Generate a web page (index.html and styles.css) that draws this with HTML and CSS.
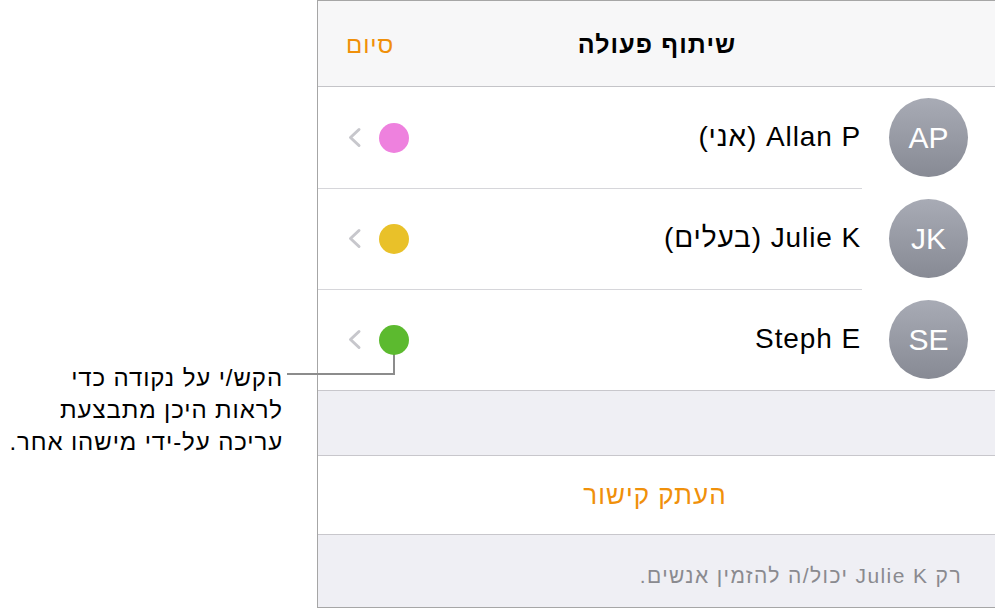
FILE: index.html
```html
<!DOCTYPE html>
<html lang="he">
<head>
  <meta charset="UTF-8">
  <meta name="viewport" content="width=device-width, initial-scale=1.0">
  <title>שיתוף פעולה</title>
  <link rel="stylesheet" href="styles.css">
</head>
<body>
  <div class="note" dir="rtl">
    <p>הקש/י על נקודה כדי<br>לראות היכן מתבצעת<br>עריכה על-ידי מישהו אחר.</p>
  </div>
  <div class="leader"></div>

  <div class="panel" dir="rtl">
    <div class="navbar">
      <span class="spacer"></span>
      <h1>שיתוף פעולה</h1>
      <a class="done">סיום</a>
    </div>

    <ul class="people">
      <li>
        <div class="avatar">AP</div>
        <div class="name">Allan P (אני)</div>
        <span class="dot pink"></span>
        <svg class="chev" width="15" height="21" viewBox="0 0 15 21"><polyline points="12,2.5 3.5,10.5 12,18.5" /></svg>
      </li>
      <li>
        <div class="avatar">JK</div>
        <div class="name">Julie K (בעלים)</div>
        <span class="dot yellow"></span>
        <svg class="chev" width="15" height="21" viewBox="0 0 15 21"><polyline points="12,2.5 3.5,10.5 12,18.5" /></svg>
      </li>
      <li>
        <div class="avatar">SE</div>
        <div class="name">Steph E</div>
        <span class="dot green"></span>
        <svg class="chev" width="15" height="21" viewBox="0 0 15 21"><polyline points="12,2.5 3.5,10.5 12,18.5" /></svg>
      </li>
    </ul>

    <div class="gap"></div>
    <div class="copy">העתק קישור</div>
    <div class="footer">רק Julie K יכול/ה להזמין אנשים.</div>
  </div>
</body>
</html>
```

FILE: styles.css
```css
body {
  margin: 0;
  display: flex;
  position: relative;
  font-family: 'Liberation Sans', 'DejaVu Sans', sans-serif;
  color: #000;
  background: #fff;
}
.note {
  width: 317px;
  flex: none;
}
.note p {
  margin: 0;
  padding: 362px 34px 0 0;
  font-size: 24px;
  line-height: 32px;
  letter-spacing: 0.9px;
  text-align: right;
  white-space: nowrap;
}
.leader {
  position: absolute;
  left: 287px;
  top: 354px;
  width: 106px;
  height: 19px;
  border-right: 2px solid #8c8c8c;
  border-bottom: 2px solid #8c8c8c;
}
.panel {
  width: 678px;
  height: 606px;
  flex: none;
  border-top: 1px solid #a6a6a6;
  border-left: 1px solid #a6a6a6;
  border-bottom: 1px solid #a6a6a6;
  background: #efeff4;
}
.navbar {
  height: 85px;
  display: flex;
  align-items: center;
  justify-content: space-between;
  background: #f7f7f8;
  border-bottom: 1px solid #c4c4c8;
}
.navbar h1 {
  margin: 0;
  padding: 2px 0 0 4px;
  font-size: 25px;
  letter-spacing: 1.1px;
  font-weight: bold;
}
.spacer {
  width: 108px;
}
.done {
  width: 104px;
  padding-top: 2px;
  color: #f0900a;
  font-size: 24px;
  letter-spacing: 0.9px;
  text-align: center;
}
.people {
  list-style: none;
  margin: 0;
  padding: 0;
  background: #fff;
  border-bottom: 1px solid #c8c7cc;
}
.people li {
  height: 101px;
  display: flex;
  align-items: center;
  padding: 0 28px 0 29px;
  position: relative;
}
.people li + li::before {
  content: "";
  position: absolute;
  top: 0;
  left: 0;
  right: 134px;
  border-top: 1px solid #d6d6da;
}
.avatar {
  width: 79px;
  height: 79px;
  border-radius: 50%;
  background: linear-gradient(#a8abb5, #878a94);
  color: #fff;
  font-size: 30px;
  display: flex;
  align-items: center;
  justify-content: center;
  flex: none;
}
.name {
  flex: 1;
  margin-right: 28px;
  font-size: 28px;
  letter-spacing: 0.9px;
  padding-bottom: 2px;
}
.dot {
  width: 30px;
  height: 30px;
  border-radius: 50%;
  margin-left: 17px;
  flex: none;
}
.pink { background: #ee81de; }
.yellow { background: #e9c129; }
.green { background: #5cba2f; }
.chev {
  flex: none;
}
.chev polyline {
  fill: none;
  stroke: #c7c7cc;
  stroke-width: 3;
  stroke-linecap: round;
  stroke-linejoin: round;
}
.gap {
  height: 64px;
  border-bottom: 1px solid #c8c7cc;
}
.copy {
  height: 78px;
  line-height: 78px;
  background: #fff;
  border-bottom: 1px solid #c8c7cc;
  color: #f0900a;
  font-size: 26px;
  letter-spacing: 1px;
  text-align: center;
  padding-right: 4px;
}
.footer {
  padding: 29px 34px 0 0;
  color: #8a8a8f;
  font-size: 21px;
  letter-spacing: 1.4px;
}
```
